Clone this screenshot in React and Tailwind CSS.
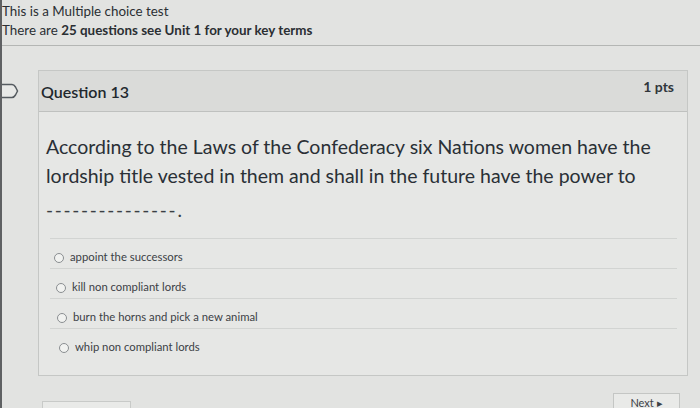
import React from 'react';

const answers = [
  { text: 'appoint the successors', pad: 'pl-[4px]' },
  { text: 'kill non compliant lords', pad: 'pl-[6px]' },
  { text: 'burn the horns and pick a new animal', pad: 'pl-[7px]' },
  { text: 'whip non compliant lords', pad: 'pl-[9px]' },
];

function Flag() {
  return (
    <svg width="20" height="16" viewBox="0 0 20 16" fill="none">
      <path d="M-2 1.5 H12 Q14 1.5 15.5 4 L17.5 8 L15.5 12 Q14 14.5 12 14.5 H-2" stroke="#555b60" strokeWidth="1.5" fill="#e8e9e7" />
    </svg>
  );
}

export default function App() {
  return (
    <div className="w-[700px] h-[408px] overflow-hidden bg-[#e2e3e1] border-l-2 border-[#5f6163] text-[#2d3b45] font-['Lato','Liberation_Sans',sans-serif]">
      {/* page intro */}
      <div className="pt-[2px] text-[13.4px] leading-[19px] text-[#2b2f33]">
        <p>This is a Multiple choice test</p>
        <p>
          There are <span className="font-bold">25 questions see Unit 1 for your key terms</span>
        </p>
      </div>
      <div className="mt-[5px] border-b border-[#b4b6b4]"></div>

      <div className="flex mt-[24px]">
        <div className="w-[38px] shrink-0 pt-[13px] -ml-[2px]">
          <Flag />
        </div>

        {/* question card */}
        <div className="w-[650px] border border-[#c5c7c5] bg-[#e6e7e5]">
          <div className="h-[41px] flex items-center justify-between pl-[2px] pr-[13px] bg-[#dadbd9] border-b border-[#bfc1bf]">
            <span className="text-[16px] font-semibold text-[#22282d] pt-[1px]">Question 13</span>
            <span className="text-[14px] font-bold text-[#30363b] -mt-[10px]">1 pts</span>
          </div>

          <div className="pl-[5px] pr-[10px] pt-[20px]">
            <p className="text-[19.5px] leading-[29px] text-[#2a3036] pl-[2px]">
              According to the Laws of the Confederacy six Nations women have the
              <br />
              lordship title vested in them and shall in the future have the power to
            </p>
            <p className="mt-[8px] text-[19px] leading-[24px] text-[#3a3f44] tracking-[1.7px] pl-[2px]">
              ---------------.
            </p>

            <div className="mt-[16px] ml-[6px] pb-[17px]">
              {answers.map((a) => (
                <div key={a.text} className={`h-[30px] flex items-center gap-[6px] border-t border-[#d2d4d2] pt-[8px] ${a.pad}`}>
                  <span className="w-[10px] h-[10px] rounded-full border border-[#8a8e91] bg-[#f1f2f0]"></span>
                  <span className="text-[11.3px] text-[#3c4146]">{a.text}</span>
                </div>
              ))}
            </div>
          </div>
        </div>
      </div>

      {/* footer buttons */}
      <div className="flex justify-between pl-[40px] pr-[20px] mt-[17px]">
        <div className="w-[89px] h-[20px] mt-[8px] border border-[#c8cac8] bg-[#e9eae8]"></div>
        <div className="w-[67px] h-[24px] border border-[#c4c6c4] bg-[#e9eae8] flex justify-center pt-[3px]">
          <span className="text-[11px] leading-[12px] text-[#3c4146]">Next ▸</span>
        </div>
      </div>
    </div>
  );
}
